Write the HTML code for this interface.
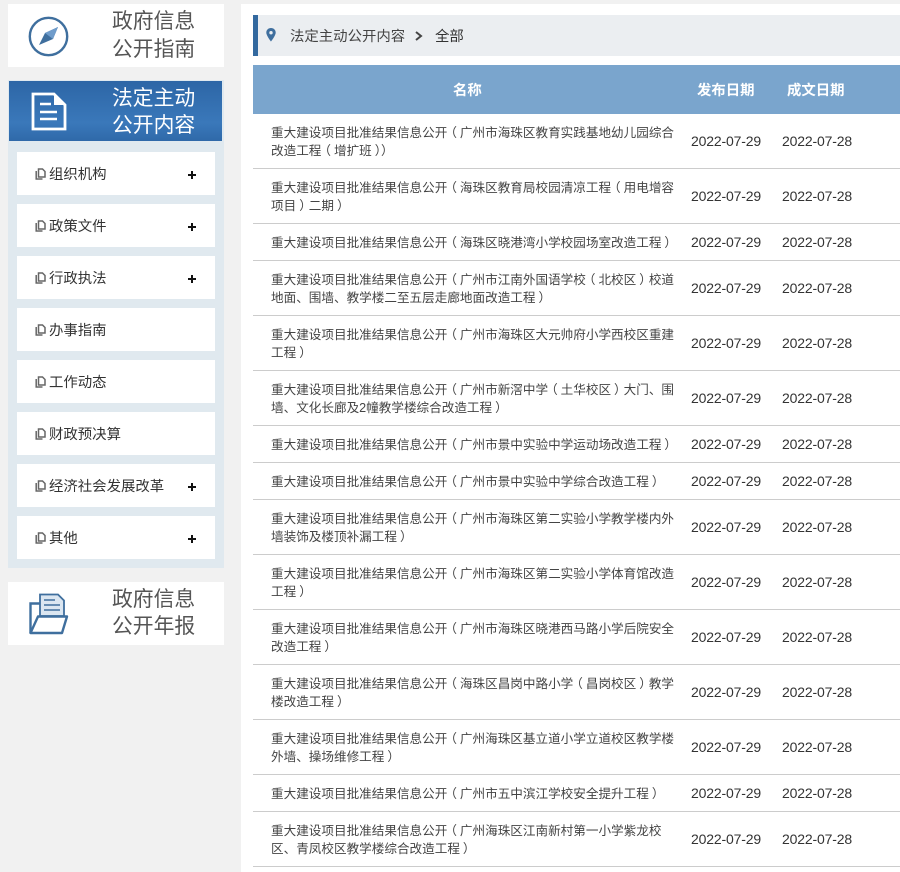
<!DOCTYPE html>
<html lang="zh-CN"><head><meta charset="utf-8"><title>法定主动公开内容</title>
<style>
*{margin:0;padding:0;box-sizing:border-box}
html,body{width:900px;height:872px;overflow:hidden;background:#f1f1f1;font-family:"Liberation Sans","Noto Sans CJK SC",sans-serif}
.a{position:absolute}
#main{left:241px;top:4px;width:659px;height:868px;background:#fff}
.card{left:8px;width:216px;background:#fff}
.big{left:112px;width:100px;font-size:20.8px;color:#555;white-space:nowrap}
.item{left:17px;width:198px;height:43px;background:#fff}
.item .t{position:absolute;left:32px;top:13px;font-size:14.4px;line-height:20px;color:#333;white-space:nowrap}
.item svg.d{position:absolute;left:18px;top:16px}
.item svg.p{position:absolute;left:171px;top:19px}
.row{left:253px;width:647px;border-bottom:1px solid #ccc}
.row .n{position:absolute;left:18px;top:10px;font-size:12.6px;line-height:18px;color:#444;white-space:nowrap}
.row .n i{font-style:normal;position:relative}
.row .n i.o{left:-3px}
.row .n i.c{left:3px}
.row .d1,.row .d2{position:absolute;font-size:14px;line-height:18px;color:#333;white-space:nowrap;letter-spacing:-.16px}
.row .d1{left:438px}.row .d2{left:529px}
.th{font-size:14.4px;font-weight:700;color:#fff;top:82px;line-height:18px;white-space:nowrap}
</style></head><body>
<div class="a" id="main"></div>

<div class="a card" style="top:4px;height:63px"></div>
<svg class="a" style="left:28px;top:16px" width="42" height="42" viewBox="0 0 42 42"><circle cx="20.5" cy="20.5" r="18.7" fill="none" stroke="#3f6f9e" stroke-width="2.4"/><path d="M30 11L25 23L11 29L17 17Z" fill="#3f6f9e"/><path d="M30 11L17 17L25 23Z" fill="#6f9ccb"/></svg>
<div class="a big" style="top:8px;line-height:28px">政府信息<br>公开指南</div>

<div class="a" style="left:8px;top:80px;width:216px;height:488px;background:#e0e9ef"></div>
<div class="a" style="left:9px;top:81px;width:213px;height:60px;background:linear-gradient(#2d66a6,#3a78ba 70%,#2f69a9)"></div>
<svg class="a" style="left:31px;top:92px" width="36" height="40" viewBox="0 0 36 40"><path d="M2 2H23L34 13V37H2Z" fill="none" stroke="#fff" stroke-width="2.8"/><path d="M23 2L34 13H23Z" fill="#fff"/><path d="M9 12H20M9 20H26M9 27H26" stroke="#fff" stroke-width="2.6"/></svg>
<div class="a big" style="top:85px;line-height:27px;color:#fff">法定主动<br>公开内容</div>

<div class="a item" style="top:152px"><svg class="d" width="11" height="12" viewBox="0 0 11 12"><path d="M3.5 1H7.5L10 3.5V9H3.5Z M1.2 3V11H7.5" fill="none" stroke="#666" stroke-width="1.5"/></svg><div class="t">组织机构</div><svg class="p" width="8" height="8"><path d="M0 4H8M4 0V8" stroke="#111" stroke-width="2"/></svg></div>
<div class="a item" style="top:204px"><svg class="d" width="11" height="12" viewBox="0 0 11 12"><path d="M3.5 1H7.5L10 3.5V9H3.5Z M1.2 3V11H7.5" fill="none" stroke="#666" stroke-width="1.5"/></svg><div class="t">政策文件</div><svg class="p" width="8" height="8"><path d="M0 4H8M4 0V8" stroke="#111" stroke-width="2"/></svg></div>
<div class="a item" style="top:256px"><svg class="d" width="11" height="12" viewBox="0 0 11 12"><path d="M3.5 1H7.5L10 3.5V9H3.5Z M1.2 3V11H7.5" fill="none" stroke="#666" stroke-width="1.5"/></svg><div class="t">行政执法</div><svg class="p" width="8" height="8"><path d="M0 4H8M4 0V8" stroke="#111" stroke-width="2"/></svg></div>
<div class="a item" style="top:308px"><svg class="d" width="11" height="12" viewBox="0 0 11 12"><path d="M3.5 1H7.5L10 3.5V9H3.5Z M1.2 3V11H7.5" fill="none" stroke="#666" stroke-width="1.5"/></svg><div class="t">办事指南</div></div>
<div class="a item" style="top:360px"><svg class="d" width="11" height="12" viewBox="0 0 11 12"><path d="M3.5 1H7.5L10 3.5V9H3.5Z M1.2 3V11H7.5" fill="none" stroke="#666" stroke-width="1.5"/></svg><div class="t">工作动态</div></div>
<div class="a item" style="top:412px"><svg class="d" width="11" height="12" viewBox="0 0 11 12"><path d="M3.5 1H7.5L10 3.5V9H3.5Z M1.2 3V11H7.5" fill="none" stroke="#666" stroke-width="1.5"/></svg><div class="t">财政预决算</div></div>
<div class="a item" style="top:464px"><svg class="d" width="11" height="12" viewBox="0 0 11 12"><path d="M3.5 1H7.5L10 3.5V9H3.5Z M1.2 3V11H7.5" fill="none" stroke="#666" stroke-width="1.5"/></svg><div class="t">经济社会发展改革</div><svg class="p" width="8" height="8"><path d="M0 4H8M4 0V8" stroke="#111" stroke-width="2"/></svg></div>
<div class="a item" style="top:516px"><svg class="d" width="11" height="12" viewBox="0 0 11 12"><path d="M3.5 1H7.5L10 3.5V9H3.5Z M1.2 3V11H7.5" fill="none" stroke="#666" stroke-width="1.5"/></svg><div class="t">其他</div><svg class="p" width="8" height="8"><path d="M0 4H8M4 0V8" stroke="#111" stroke-width="2"/></svg></div>

<div class="a card" style="top:582px;height:63px"></div>
<svg class="a" style="left:28px;top:592px" width="42" height="44" viewBox="0 0 42 44"><path d="M2.5 41V11.5H12" fill="none" stroke="#3f6f9e" stroke-width="2.4"/><path d="M12 24V2.5H30L36 8.5V24Z" fill="#dbe6f1" stroke="#3f6f9e" stroke-width="1.8"/><path d="M16 8H27M16 13H32M16 18H32" stroke="#3f6f9e" stroke-width="1.4"/><path d="M2.5 41L10 24.5H39L34 41Z" fill="#fff" stroke="#3f6f9e" stroke-width="2.4" stroke-linejoin="round"/></svg>
<div class="a big" style="top:586px;line-height:27px">政府信息<br>公开年报</div>

<div class="a" style="left:253px;top:15px;width:647px;height:41px;background:#ebeef1"></div>
<div class="a" style="left:253px;top:15px;width:5px;height:41px;background:#33699f"></div>
<svg class="a" style="left:266px;top:28px" width="10" height="14" viewBox="0 0 10 14"><path fill-rule="evenodd" d="M5 0C2.2 0 .3 2 .3 4.6 .3 7.6 5 13.5 5 13.5S9.7 7.6 9.7 4.6C9.7 2 7.8 0 5 0ZM5 3A1.7 1.7 0 1 1 5 6.4 1.7 1.7 0 0 1 5 3Z" fill="#3f6f9e"/></svg>
<div class="a" style="left:290px;top:27px;font-size:14.4px;line-height:20px;color:#444;white-space:nowrap">法定主动公开内容</div>
<svg class="a" style="left:414px;top:30px" width="9" height="12"><path d="M2 2L7 6L2 10" fill="none" stroke="#444" stroke-width="2"/></svg>
<div class="a" style="left:435px;top:27px;font-size:14.4px;line-height:20px;color:#333;white-space:nowrap">全部</div>

<div class="a" style="left:253px;top:65px;width:647px;height:49px;background:#7aa5cd"></div>
<div class="a th" style="left:453px">名称</div>
<div class="a th" style="left:697px">发布日期</div>
<div class="a th" style="left:787px">成文日期</div>

<div class="a row" style="top:114px;height:55px"><div class="n">重大建设项目批准结果信息公开<i class="o">（</i>广州市海珠区教育实践基地幼儿园综合<br>改造工程<i class="o">（</i>增扩班<i class="c">）</i><i class="c">）</i></div><div class="d1" style="top:18px">2022-07-29</div><div class="d2" style="top:18px">2022-07-28</div></div>
<div class="a row" style="top:169px;height:55px"><div class="n">重大建设项目批准结果信息公开<i class="o">（</i>海珠区教育局校园清凉工程<i class="o">（</i>用电增容<br>项目<i class="c">）</i>二期<i class="c">）</i></div><div class="d1" style="top:18px">2022-07-29</div><div class="d2" style="top:18px">2022-07-28</div></div>
<div class="a row" style="top:224px;height:37px"><div class="n">重大建设项目批准结果信息公开<i class="o">（</i>海珠区晓港湾小学校园场室改造工程<i class="c">）</i></div><div class="d1" style="top:9px">2022-07-29</div><div class="d2" style="top:9px">2022-07-28</div></div>
<div class="a row" style="top:261px;height:55px"><div class="n">重大建设项目批准结果信息公开<i class="o">（</i>广州市江南外国语学校<i class="o">（</i>北校区<i class="c">）</i>校道<br>地面、围墙、教学楼二至五层走廊地面改造工程<i class="c">）</i></div><div class="d1" style="top:18px">2022-07-29</div><div class="d2" style="top:18px">2022-07-28</div></div>
<div class="a row" style="top:316px;height:55px"><div class="n">重大建设项目批准结果信息公开<i class="o">（</i>广州市海珠区大元帅府小学西校区重建<br>工程<i class="c">）</i></div><div class="d1" style="top:18px">2022-07-29</div><div class="d2" style="top:18px">2022-07-28</div></div>
<div class="a row" style="top:371px;height:55px"><div class="n">重大建设项目批准结果信息公开<i class="o">（</i>广州市新滘中学<i class="o">（</i>土华校区<i class="c">）</i>大门、围<br>墙、文化长廊及2幢教学楼综合改造工程<i class="c">）</i></div><div class="d1" style="top:18px">2022-07-29</div><div class="d2" style="top:18px">2022-07-28</div></div>
<div class="a row" style="top:426px;height:37px"><div class="n">重大建设项目批准结果信息公开<i class="o">（</i>广州市景中实验中学运动场改造工程<i class="c">）</i></div><div class="d1" style="top:9px">2022-07-29</div><div class="d2" style="top:9px">2022-07-28</div></div>
<div class="a row" style="top:463px;height:37px"><div class="n">重大建设项目批准结果信息公开<i class="o">（</i>广州市景中实验中学综合改造工程<i class="c">）</i></div><div class="d1" style="top:9px">2022-07-29</div><div class="d2" style="top:9px">2022-07-28</div></div>
<div class="a row" style="top:500px;height:55px"><div class="n">重大建设项目批准结果信息公开<i class="o">（</i>广州市海珠区第二实验小学教学楼内外<br>墙装饰及楼顶补漏工程<i class="c">）</i></div><div class="d1" style="top:18px">2022-07-29</div><div class="d2" style="top:18px">2022-07-28</div></div>
<div class="a row" style="top:555px;height:55px"><div class="n">重大建设项目批准结果信息公开<i class="o">（</i>广州市海珠区第二实验小学体育馆改造<br>工程<i class="c">）</i></div><div class="d1" style="top:18px">2022-07-29</div><div class="d2" style="top:18px">2022-07-28</div></div>
<div class="a row" style="top:610px;height:55px"><div class="n">重大建设项目批准结果信息公开<i class="o">（</i>广州市海珠区晓港西马路小学后院安全<br>改造工程<i class="c">）</i></div><div class="d1" style="top:18px">2022-07-29</div><div class="d2" style="top:18px">2022-07-28</div></div>
<div class="a row" style="top:665px;height:55px"><div class="n">重大建设项目批准结果信息公开<i class="o">（</i>海珠区昌岗中路小学<i class="o">（</i>昌岗校区<i class="c">）</i>教学<br>楼改造工程<i class="c">）</i></div><div class="d1" style="top:18px">2022-07-29</div><div class="d2" style="top:18px">2022-07-28</div></div>
<div class="a row" style="top:720px;height:55px"><div class="n">重大建设项目批准结果信息公开<i class="o">（</i>广州海珠区基立道小学立道校区教学楼<br>外墙、操场维修工程<i class="c">）</i></div><div class="d1" style="top:18px">2022-07-29</div><div class="d2" style="top:18px">2022-07-28</div></div>
<div class="a row" style="top:775px;height:37px"><div class="n">重大建设项目批准结果信息公开<i class="o">（</i>广州市五中滨江学校安全提升工程<i class="c">）</i></div><div class="d1" style="top:9px">2022-07-29</div><div class="d2" style="top:9px">2022-07-28</div></div>
<div class="a row" style="top:812px;height:55px"><div class="n">重大建设项目批准结果信息公开<i class="o">（</i>广州海珠区江南新村第一小学紫龙校<br>区、青凤校区教学楼综合改造工程<i class="c">）</i></div><div class="d1" style="top:18px">2022-07-29</div><div class="d2" style="top:18px">2022-07-28</div></div>
</body></html>
